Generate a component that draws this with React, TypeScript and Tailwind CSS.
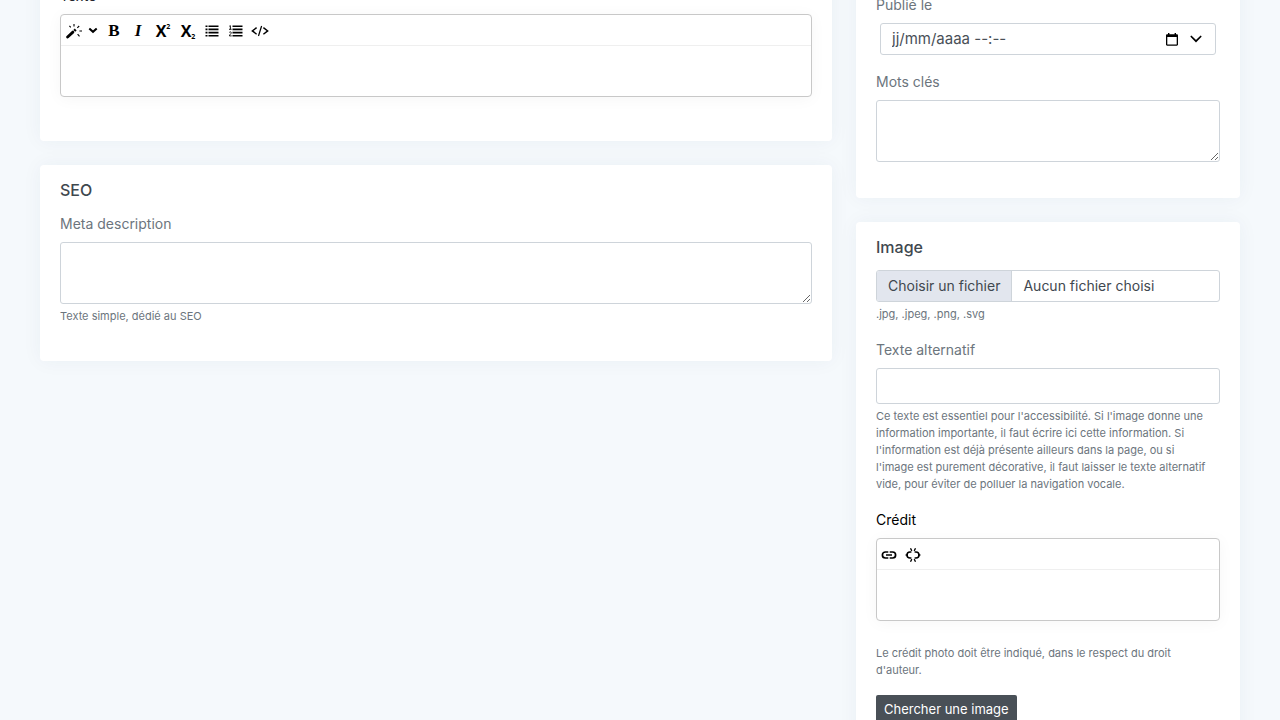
/**
 * Article edit form
 *
 * Two columns of cards: body text + SEO on the left,
 * publication settings + image on the right.
 */

import type { ReactNode } from 'react';

interface CardProps {
  title?: string;
  className?: string;
  children: ReactNode;
}

const Card = ({ title, className = 'pt-4', children }: CardProps) => (
  <section className={`rounded bg-white px-5 pb-5 shadow-[0_0_20px_rgba(8,60,100,0.05)] ${className}`}>
    {title && <h2 className="mb-3.5 text-base leading-[18px] font-medium text-[#3f484f]">{title}</h2>}
    {children}
  </section>
);

interface FieldProps {
  id: string;
  label: string;
  help?: string;
  children: ReactNode;
}

const Field = ({ id, label, help, children }: FieldProps) => (
  <div className="mb-4">
    <label htmlFor={id} className="mb-2 block text-sm leading-[21px] text-[#6c757d]">
      {label}
    </label>
    {children}
    {help && <Help>{help}</Help>}
  </div>
);

const Help = ({ children }: { children: ReactNode }) => (
  <p className="mt-1 pr-2 text-[11px] leading-[17px] text-[#6c757d]">{children}</p>
);

const TextArea = ({ id }: { id: string }) => (
  <textarea id={id} className="block h-[62px] w-full rounded-[3px] border border-[#ced4da] bg-white px-3 py-1 text-sm" />
);

interface Tool {
  name: string;
  width: string;
  icon: ReactNode;
}

const WandIcon = () => (
  <svg width="16" height="16" viewBox="0 0 16 16" fill="none" stroke="#000">
    <path d="M1.6 14 6.9 9.1" strokeWidth="2.8" strokeLinecap="round" />
    <path d="M8.3 7.9 9.7 6.5" strokeWidth="2.6" />
    <path d="M8 1v2.6M3.4 2.8l1.4 1.5M13.2 3l-1.9 1.9M13.4 8h2.6M11.6 11.2l1.9 2.2" strokeWidth="1.1" />
  </svg>
);

const CaretIcon = () => (
  <svg width="10" height="8" viewBox="0 0 10 8" fill="none" stroke="#000" strokeWidth="2">
    <path d="m1.3 1.4 3.7 3.4 3.7-3.4" />
  </svg>
);

const BulletsIcon = () => (
  <svg width="14" height="12" viewBox="0 0 14 12" fill="#000">
    <path d="M.5.5h2v1.6h-2zM.5 3.6h2v1.6h-2zM.5 6.800h2v1.600h-2zM.5 10h2v1.600h-2zM3.500.5H13.500v1.600H3.500zM3.500 3.600H13.500v1.600H3.500zM3.500 6.800H13.500v1.600H3.500zM3.500 10H13.500v1.600H3.500z" />
  </svg>
);

const NumbersIcon = () => (
  <svg width="14" height="12" viewBox="0 0 14 12" fill="#000">
    <path d="M3.5.5H13.5v1.6H3.5zM3.5 3.6H13.5v1.6H3.5zM3.5 6.8H13.5v1.6H3.5zM3.5 10H13.5v1.6H3.5z" />
    <path d="M.3 1.2 1.4.7v3.6M0 4.3h2.6M.3 7.4c.8-.9 2-.5 2 .4 0 .9-1.9 1.8-1.9 3.1h2.3" fill="none" stroke="#000" strokeWidth=".9" />
  </svg>
);

const CodeIcon = () => (
  <svg width="18" height="12" viewBox="0 0 18 12" fill="none" stroke="#000">
    <path d="M5.600 2.600 1.300 5.900l4.300 3.300M12.400 2.600l4.300 3.300-4.300 3.300" strokeWidth="1.4" />
    <path d="M10.6 1 7.500 11" strokeWidth="1.2" />
  </svg>
);

const LinkIcon = () => (
  <svg width="16" height="16" viewBox="0 0 16 16" fill="none" stroke="#000" strokeWidth="1.7">
    <path d="M7.300 5H4.400a3 3 0 0 0 0 6h2.900M8.700 5h2.900a3 3 0 0 1 0 6H8.700M5 8h6" />
  </svg>
);

const UnlinkIcon = () => (
  <svg width="16" height="16" viewBox="0 0 16 16" fill="none" stroke="#000">
    <path d="M6.400 5H5a3 3 0 0 0-3 3 3 3 0 0 0 3 3h1.400M9.600 5H11a3 3 0 0 1 3 3 3 3 0 0 1-3 3H9.600M.6 8h2.400M13 8h2.400" strokeWidth="1.6" />
    <path d="M6.800 3.900 5.500 1.200M9.200 3.900l1.300-2.700M6.800 12.100l-1.300 2.700M9.200 12.100l1.300 2.700" strokeWidth="1.3" />
  </svg>
);

const textTools: Tool[] = [
  { name: 'Style', width: 'w-[41px]', icon: <><WandIcon /><span className="w-1.5" /><CaretIcon /></> },
  { name: 'Gras', width: 'w-6', icon: <span className="font-['Liberation_Serif',serif] text-[17px] leading-5 font-bold">B</span> },
  { name: 'Italique', width: 'w-6', icon: <span className="font-['Liberation_Serif',serif] text-[17px] leading-5 font-bold italic">I</span> },
  {
    name: 'Exposant',
    width: 'w-[26px]',
    icon: <span className="flex items-start font-['Open_Sans',sans-serif] text-base leading-5 font-bold">X<span className="text-[7px] leading-3">2</span></span>,
  },
  {
    name: 'Indice',
    width: 'w-6',
    icon: <span className="flex items-end font-['Open_Sans',sans-serif] text-base leading-5 font-bold">X<span className="text-[7px] leading-[9px]">2</span></span>,
  },
  { name: 'Liste à puces', width: 'w-6', icon: <BulletsIcon /> },
  { name: 'Liste numérotée', width: 'w-6', icon: <NumbersIcon /> },
  { name: 'Code source', width: 'w-6', icon: <CodeIcon /> },
];

const creditTools: Tool[] = [
  { name: 'Lien', width: 'w-6', icon: <LinkIcon /> },
  { name: 'Supprimer le lien', width: 'w-6', icon: <UnlinkIcon /> },
];

const Editor = ({ id, tools }: { id: string; tools: Tool[] }) => (
  <div className="mb-6 overflow-hidden rounded border border-[#c8c8c8] bg-white shadow-[0_2px_16px_rgba(0,0,0,0.04)]">
    <div className="flex h-[31px] items-center border-b border-[#efefef] pt-0.5">
      {tools.map((tool) => (
        <button
          key={tool.name}
          type="button"
          aria-label={tool.name}
          className={`flex h-6 shrink-0 items-center justify-center text-black ${tool.width}`}
        >
          {tool.icon}
        </button>
      ))}
    </div>
    <textarea id={id} className="block h-[50px] w-full resize-none px-3 py-2 text-sm outline-none" />
  </div>
);

const App = () => {
  return (
    <div className="h-screen overflow-hidden bg-[#f5f9fc] font-[Inter,sans-serif]">
      <form className="-mt-[35px] grid grid-cols-12 items-start gap-6 px-10">
        <div className="col-span-8 flex flex-col gap-6">
          <Card className="pt-5">
            <label htmlFor="text" className="mb-2 block text-sm leading-[21px] text-[#212529]">Texte</label>
            <Editor id="text" tools={textTools} />
          </Card>

          <Card title="SEO">
            <Field id="meta" label="Meta description" help="Texte simple, dédié au SEO">
              <TextArea id="meta" />
            </Field>
          </Card>
        </div>

        <div className="col-span-4 flex flex-col gap-6">
          <Card className="pt-[29px]">
            <Field id="published" label="Publié le">
              <div className="mx-1 flex h-8 items-center rounded-[3px] border border-[#ced4da] pr-[13px] pl-[11px]">
                <input
                  id="published"
                  type="text"
                  placeholder="jj/mm/aaaa --:--"
                  className="min-w-0 flex-1 bg-transparent text-[15px] leading-5 outline-none placeholder:text-[#495057]"
                />
                <button type="button" aria-label="Ouvrir le calendrier" className="flex items-center gap-3">
                  <svg width="12" height="13" viewBox="0 0 12 13" fill="#000">
                    <path d="M2 0h1.400v1.200h5.200V0H10v1.200h.8c.7 0 1.200.5 1.200 1.200v9.200c0 .7-.5 1.200-1.200 1.200H1.200C.5 12.800 0 12.300 0 11.600V2.400C0 1.700.5 1.200 1.200 1.200H2zM1.300 4v7.500h9.400V4z" fillRule="evenodd" />
                  </svg>
                  <svg width="12" height="8" viewBox="0 0 12 8" fill="none" stroke="#000" strokeWidth="1.7" strokeLinecap="round">
                    <path d="m1.300 1.500 4.700 4.700 4.700-4.700" />
                  </svg>
                </button>
              </div>
            </Field>
            <Field id="keywords" label="Mots clés">
              <TextArea id="keywords" />
            </Field>
          </Card>

          <Card title="Image">
            <div className="mb-4">
              <label className="relative flex h-8 overflow-hidden rounded-[3px] border border-[#ced4da] text-sm leading-[30px] text-[#3f484f]">
                <input type="file" accept=".jpg,.jpeg,.png,.svg" className="sr-only" />
                <span className="border-r border-[#ced4da] bg-[#e2e6ee] px-[11px]">Choisir un fichier</span>
                <span className="px-[11px]">Aucun fichier choisi</span>
              </label>
              <Help>.jpg, .jpeg, .png, .svg</Help>
            </div>

            <Field
              id="alt"
              label="Texte alternatif"
              help="Ce texte est essentiel pour l'accessibilité. Si l'image donne une information importante, il faut écrire ici cette information. Si l'information est déjà présente ailleurs dans la page, ou si l'image est purement décorative, il faut laisser le texte alternatif vide, pour éviter de polluer la navigation vocale."
            >
              <input id="alt" type="text" className="block h-9 w-full rounded-[3px] border border-[#ced4da] px-3 text-sm" />
            </Field>

            <label htmlFor="credit" className="mb-2 block text-sm leading-[21px] text-black">Crédit</label>
            <Editor id="credit" tools={creditTools} />
            <Help>Le crédit photo doit être indiqué, dans le respect du droit d'auteur.</Help>

            <button type="button" className="mt-4 h-[27px] rounded-[2px] bg-[#495057] px-2 text-[13px] leading-5 text-white">
              Chercher une image
            </button>
          </Card>
        </div>
      </form>
    </div>
  );
};

export default App;
